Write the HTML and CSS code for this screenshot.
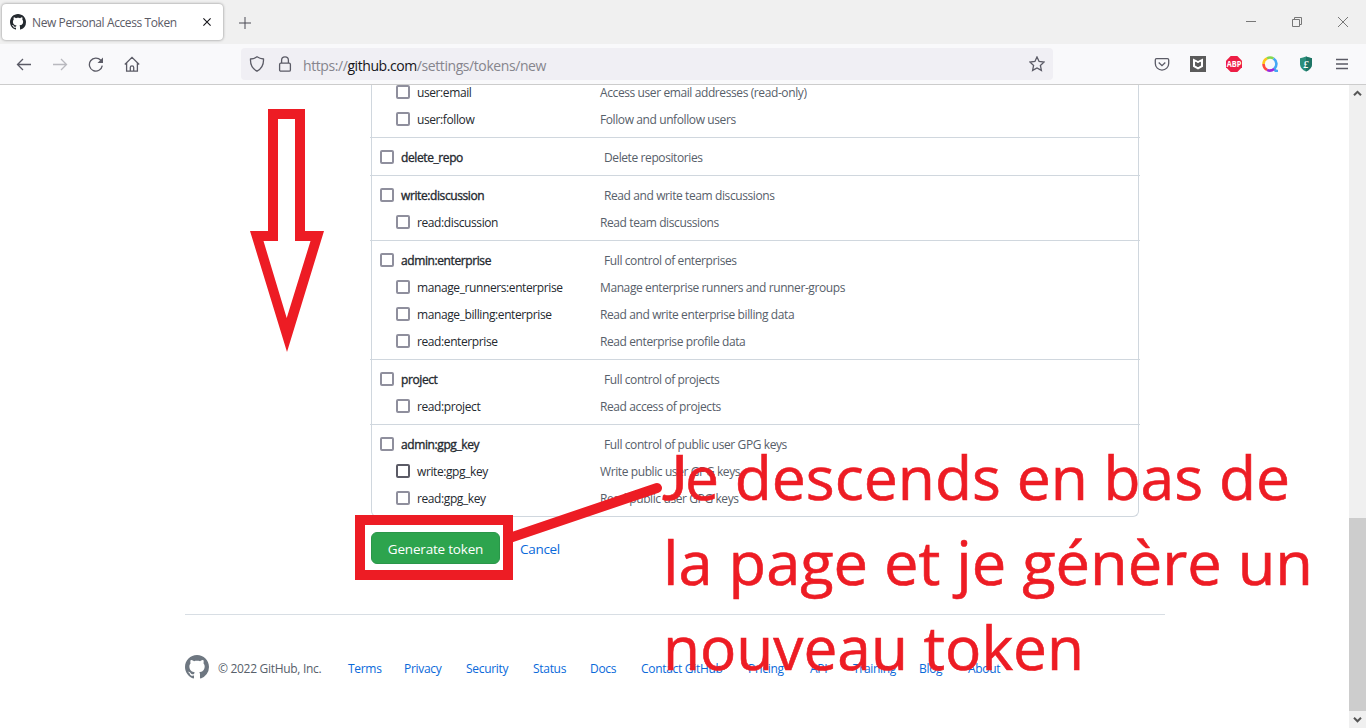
FILE: index.html
```html
<!DOCTYPE html>
<html lang="en">
<head>
<meta charset="utf-8">
<title>New Personal Access Token</title>
<link rel="stylesheet" href="styles.css">
</head>
<body>
<svg width="0" height="0" class="defs">
  <symbol id="mark" viewBox="0 0 16 16"><path d="M8 0C3.58 0 0 3.58 0 8c0 3.54 2.29 6.53 5.47 7.59.4.07.55-.17.55-.38 0-.19-.01-.82-.01-1.49-2.01.37-2.53-.49-2.69-.94-.09-.23-.48-.94-.82-1.13-.28-.15-.68-.52-.01-.53.63-.01 1.08.58 1.23.82.72 1.21 1.87.87 2.33.66.07-.52.28-.87.51-1.07-1.78-.2-3.64-.89-3.64-3.95 0-.87.31-1.59.82-2.15-.08-.2-.36-1.02.08-2.12 0 0 .67-.21 2.2.82.64-.18 1.32-.27 2-.27s1.36.09 2 .27c1.53-1.04 2.2-.82 2.2-.82.44 1.1.16 1.92.08 2.12.51.56.82 1.27.82 2.15 0 3.07-1.87 3.75-3.65 3.95.29.25.54.73.54 1.48 0 1.07-.01 1.93-.01 2.2 0 .21.15.46.55.38A8.01 8.01 0 0 0 16 8c0-4.42-3.58-8-8-8z"/></symbol>
</svg>
<div class="browser">
  <header class="tabbar">
    <div class="tab">
      <svg class="i16 favicon"><use href="#mark"/></svg>
      <span class="tab-title">New Personal Access Token</span>
      <svg class="tab-close" width="8" height="8" viewBox="0 0 8 8"><path d="M.4.4l7.2 7.2M7.6.4L.4 7.6"/></svg>
    </div>
    <svg class="newtab" width="12" height="12" viewBox="0 0 12 12"><path d="M6 0v12M0 6h12"/></svg>
    <div class="window-buttons">
      <svg width="10" height="10" viewBox="0 0 10 10"><path d="M0 4.5h10"/></svg>
      <svg width="10" height="10" viewBox="0 0 10 10"><path d="M.5 2.5h7v7h-7zM2.500 2.500v-2h7v7h-2"/></svg>
      <svg width="10" height="10" viewBox="0 0 10 10"><path d="M0 0l10 10M10 0L0 10"/></svg>
    </div>
  </header>
  <nav class="toolbar">
    <div class="nav-buttons">
      <svg class="i16" viewBox="0 0 16 16"><path d="M15 8.500H1.500M7 3L1.500 8.500 7 14"/></svg>
      <svg class="i16 off" viewBox="0 0 16 16"><path d="M1 8.500h13.500M9 3l5.500 5.500L9 14"/></svg>
      <svg class="i16" viewBox="0 0 16 16"><path d="M14.300 9.700A6.500 6.500 0 1 1 12.800 4.300L14.400 5.900"/><path class="solid" d="M15 1.500V7H9.500z"/></svg>
      <svg class="i16" viewBox="0 0 16 16"><path d="M.8 8.500L8 1.400l7.200 7.100M2.600 7v8.200h10.800V7M6.300 15v-3.500c0-1 .7-1.600 1.700-1.600s1.700.6 1.700 1.600V15"/></svg>
    </div>
    <div class="urlbar">
      <svg class="i16" viewBox="0 0 16 16"><path d="M8 .8c2 1.400 4 2 6.500 2.200.3 5.500-1.700 9.700-6.500 12.200C3.200 12.700 1.200 8.500 1.500 3 4 2.800 6 2.200 8 .8z"/></svg>
      <svg class="i16 lock" viewBox="0 0 16 16"><rect x="2.600" y="7.200" width="10.800" height="8" rx="1.300"/><path d="M4.600 7V4.300a3.400 3.400 0 0 1 6.800 0V7"/></svg>
      <span class="url">https://<b>github.com</b>/settings/tokens/new</span>
      <svg class="i16 star" viewBox="0 0 16 16"><path d="M8 .9l2.100 4.500 5 .6-3.700 3.400 1 5L8 12l-4.400 2.400 1-5L.9 6l5-.6z"/></svg>
    </div>
    <div class="extensions">
      <svg class="i16" viewBox="0 0 16 16"><path d="M2.500 2.700h11c.7 0 1.200.5 1.200 1.200V7.400a6.700 6.700 0 0 1-13.400 0V3.900c0-.7.500-1.200 1.200-1.200zM4.700 6.500L8 9.600l3.300-3.100"/></svg>
      <svg class="i16" viewBox="0 0 16 16"><path fill="#5b5b5b" stroke="none" d="M0 0h16v16H0z"/><path fill="#fff" stroke="none" d="M3 2.500l5 2.500 5-2.500v8.300L8 13.500l-5-2.700zM5.200 5.800v3.700L8 11l2.800-1.500V5.800L8 7.200z"/><path fill="#5b5b5b" stroke="none" d="M5.200 5.800L8 7.200l2.800-1.400v3.700L8 11 5.200 9.500z"/></svg>
      <svg class="i16" viewBox="0 0 16 16"><path fill="#ed1e45" stroke="none" d="M4.700 0h6.600L16 4.700v6.600L11.300 16H4.700L0 11.300V4.700z"/><text x="8" y="11" class="abp" textLength="14.600" lengthAdjust="spacingAndGlyphs">ABP</text></svg>
      <svg class="i16 ring" viewBox="0 0 16 16"><path stroke="#ffc61a" d="M1.500 8A6.500 6.500 0 0 1 5 2.300"/><path stroke="#85d950" d="M5 2.300a6.500 6.500 0 0 1 6.500.2"/><path stroke="#45a8f5" d="M11.500 2.500A6.500 6.500 0 0 1 12.500 12.500l1.200 2.500H16"/><path stroke="#9b28db" d="M12 13a6.500 6.500 0 0 1-7 .8"/><path stroke="#ff4a3d" d="M5 13.800A6.500 6.500 0 0 1 1.500 8"/></svg>
      <svg class="i16" viewBox="0 0 16 16"><path fill="#2b8e7b" stroke="none" d="M2 2.200Q5 2 8 .6q3 1.400 6 1.600v6.300Q13.500 13 8 15.500 2.500 13 2 8.500z"/><path fill="#1e7465" stroke="none" d="M8 .6q3 1.400 6 1.600v6.300Q13.500 13 8 15.500z"/><text class="pound" x="8" y="11.600">£</text></svg>
      <svg class="i16" viewBox="0 0 16 16"><path d="M2 3.500h12M2 8h12M2 12.500h12"/></svg>
    </div>
  </nav>
  <div class="viewport">
    <main class="page">
      <ul class="scopes">
        <li>
          <div class="scope child"><i></i><label>user:email</label><span>Access user email addresses (read-only)</span></div>
          <div class="scope child"><i></i><label>user:follow</label><span>Follow and unfollow users</span></div>
        </li>
        <li>
          <div class="scope"><i></i><label>delete_repo</label><span>Delete repositories</span></div>
        </li>
        <li>
          <div class="scope"><i></i><label>write:discussion</label><span>Read and write team discussions</span></div>
          <div class="scope child"><i></i><label>read:discussion</label><span>Read team discussions</span></div>
        </li>
        <li>
          <div class="scope"><i></i><label>admin:enterprise</label><span>Full control of enterprises</span></div>
          <div class="scope child"><i></i><label>manage_runners:enterprise</label><span>Manage enterprise runners and runner-groups</span></div>
          <div class="scope child"><i></i><label>manage_billing:enterprise</label><span>Read and write enterprise billing data</span></div>
          <div class="scope child"><i></i><label>read:enterprise</label><span>Read enterprise profile data</span></div>
        </li>
        <li>
          <div class="scope"><i></i><label>project</label><span>Full control of projects</span></div>
          <div class="scope child"><i></i><label>read:project</label><span>Read access of projects</span></div>
        </li>
        <li>
          <div class="scope"><i></i><label>admin:gpg_key</label><span>Full control of public user GPG keys</span></div>
          <div class="scope child"><i class="hover"></i><label>write:gpg_key</label><span>Write public user GPG keys</span></div>
          <div class="scope child"><i></i><label>read:gpg_key</label><span>Read public user GPG keys</span></div>
        </li>
      </ul>
      <div class="actions"><button>Generate token</button><a>Cancel</a></div>
      <footer>
        <svg class="footer-mark" width="24" height="24"><use href="#mark"/></svg>
        <span class="copy">© 2022 GitHub, Inc.</span>
        <a>Terms</a><a>Privacy</a><a>Security</a><a>Status</a><a>Docs</a><a>Contact GitHub</a><a>Pricing</a><a>API</a><a>Training</a><a>Blog</a><a>About</a>
      </footer>
    </main>
    <aside class="scrollbar">
      <svg width="17" height="17" viewBox="0 0 17 17"><path d="M5 10.300L8.500 6.800l3.500 3.500"/></svg>
      <div class="thumb"></div>
      <svg width="17" height="17" viewBox="0 0 17 17"><path d="M5 6.800l3.500 3.500L12 6.800"/></svg>
    </aside>
  </div>
</div>
<svg class="annotation" width="1366" height="728" viewBox="0 0 1366 728">
  <path fill-rule="evenodd" d="M268 109h37v122h19l-37 121-37-121h18zM278 119v122h-14.500L286.700 318 310.500 241H295V119z"/>
  <path fill-rule="evenodd" d="M355 515h158v65H355zM365 525v45h138v-45z"/>
  <path class="leader" d="M508 538.500L657 488"/>
  <text y="500"><tspan class="cap-j" x="662">J</tspan><tspan x="685" textLength="605" lengthAdjust="spacingAndGlyphs">e descends en bas de</tspan></text>
  <text x="663" y="585" textLength="650" lengthAdjust="spacingAndGlyphs">la page et je génère un</text>
  <text x="663" y="670" textLength="421" lengthAdjust="spacingAndGlyphs">nouveau token</text>
</svg>
</body>
</html>
```
FILE: styles.css
```css
* { box-sizing: border-box; }
body { margin: 0; overflow: hidden; background: #fff; font-family: "Open Sans", "Noto Sans", sans-serif; font-size: 12px; }
svg { display: block; flex: none; }
.defs { position: absolute; }
.browser { display: flex; flex-direction: column; width: 1366px; height: 728px; }
.i16 { width: 16px; height: 16px; }

.tabbar { display: flex; align-items: center; height: 44px; background: #f0f0f0; }
.tab { display: flex; align-items: center; width: 221px; height: 36px; margin-left: 2px; padding: 0 12px 0 8px; border-radius: 4px; background: #fff; box-shadow: 0 0 3px rgba(0,0,0,.45); }
.favicon { fill: #24292f; }
.tab-title { flex: 1; margin-left: 6px; padding-top: 1px; color: #5b5b66; letter-spacing: -.4px; white-space: nowrap; }
.tab-close { stroke: #15141a; stroke-width: 1.1; }
.newtab { margin: 2px 0 0 16px; stroke: #4a4a55; }
.window-buttons { display: flex; gap: 36px; margin-left: auto; margin-right: 18px; fill: none; stroke: #777; }

.toolbar { display: flex; align-items: center; height: 41px; border-bottom: 1px solid #ccc; background: #f9f9fb; fill: none; stroke: #5b5b66; stroke-width: 1.3; }
.nav-buttons { display: flex; gap: 20px; padding-left: 16px; }
.nav-buttons .off { opacity: .4; }
.nav-buttons .solid { fill: #5b5b66; stroke: none; }
.urlbar { display: flex; align-items: center; width: 812px; height: 32px; margin-left: 101px; padding: 0 8px; border-radius: 4px; background: #f0eff4; }
.lock { margin-left: 12px; }
.url { margin-left: 10px; padding-top: 2px; color: #86858d; font-size: 14px; letter-spacing: -.42px; white-space: nowrap; }
.url b { color: #15141a; font-weight: 400; }
.star { margin-left: auto; }
.extensions { display: flex; gap: 20px; margin-left: 101px; }
.abp { fill: #fff; stroke: none; font-size: 8px; font-weight: 700; text-anchor: middle; }
.ring { stroke-width: 2.600; }
.pound { fill: #fff; stroke: none; font: italic 700 10px "Liberation Serif", serif; text-anchor: middle; }

.viewport { display: flex; flex: 1; overflow: hidden; }
.page { flex: 1; height: 643px; overflow: hidden; }
.scopes { width: 768px; margin: -6px 0 0 371px; padding: 0; border: 1px solid #d0d7de; border-top: 0; border-radius: 6px; list-style: none; }
.scopes li { padding-bottom: 4px; }
.scopes li + li { margin: 0 -2px; padding: 6px 2px 4px; border-top: 1px solid #d0d7de; }
.scope { display: grid; grid-template-columns: 21px 203px 1fr; align-items: center; height: 27px; padding-left: 8px; color: #57606a; line-height: 18px; letter-spacing: -.4px; white-space: nowrap; }
.scope.child { grid-template-columns: 21px 183px 1fr; padding-left: 24px; }
.scope i { width: 14px; height: 14px; margin-bottom: 1px; border: 2px solid #8f8f9d; border-radius: 2px; }
.scope i.hover { border-color: #5b5b66; }
.scope label, .scope span { padding-top: 1px; }
.scope label { color: #24292f; }
.scope:not(.child) label { -webkit-text-stroke: .35px #24292f; }
.actions { display: flex; align-items: center; gap: 20px; margin: 15px 0 0 371px; }
.actions button { width: 129px; height: 32px; padding: 2px 0 0; border: 1px solid #2a964a; border-radius: 6px; background: #2da44e; color: #fff; font: 400 13.5px "Open Sans", sans-serif; letter-spacing: -.2px; white-space: nowrap; }
a { color: #0969da; }
.actions a { padding-top: 2px; font-size: 13.5px; letter-spacing: -.3px; }
footer { display: grid; grid-template-columns: 33px 130px 56px 62px 67px 57px 51px 107px 62px 43px 66px 49px 1fr; align-items: center; width: 980px; margin: 50px 0 0 185px; padding-top: 40px; border-top: 1px solid #d8dee4; letter-spacing: -.3px; white-space: nowrap; }
.footer-mark { fill: #6e7781; }
.copy { color: #57606a; }
footer a, .copy { padding-top: 4px; line-height: 18px; }
.scrollbar { display: flex; flex-direction: column; width: 17px; background: #f0f0f0; fill: none; stroke: #555; stroke-width: 2; }
.thumb { height: 193px; margin-top: auto; background: #cdcdcd; }

.annotation { position: absolute; top: 0; left: 0; fill: #ed1c24; font-size: 61px; }
.annotation text { stroke: #ed1c24; stroke-width: .6; }
.cap-j { font-family: Lato, sans-serif; }
.leader { stroke: #ed1c24; stroke-width: 10; stroke-linecap: round; }
```
